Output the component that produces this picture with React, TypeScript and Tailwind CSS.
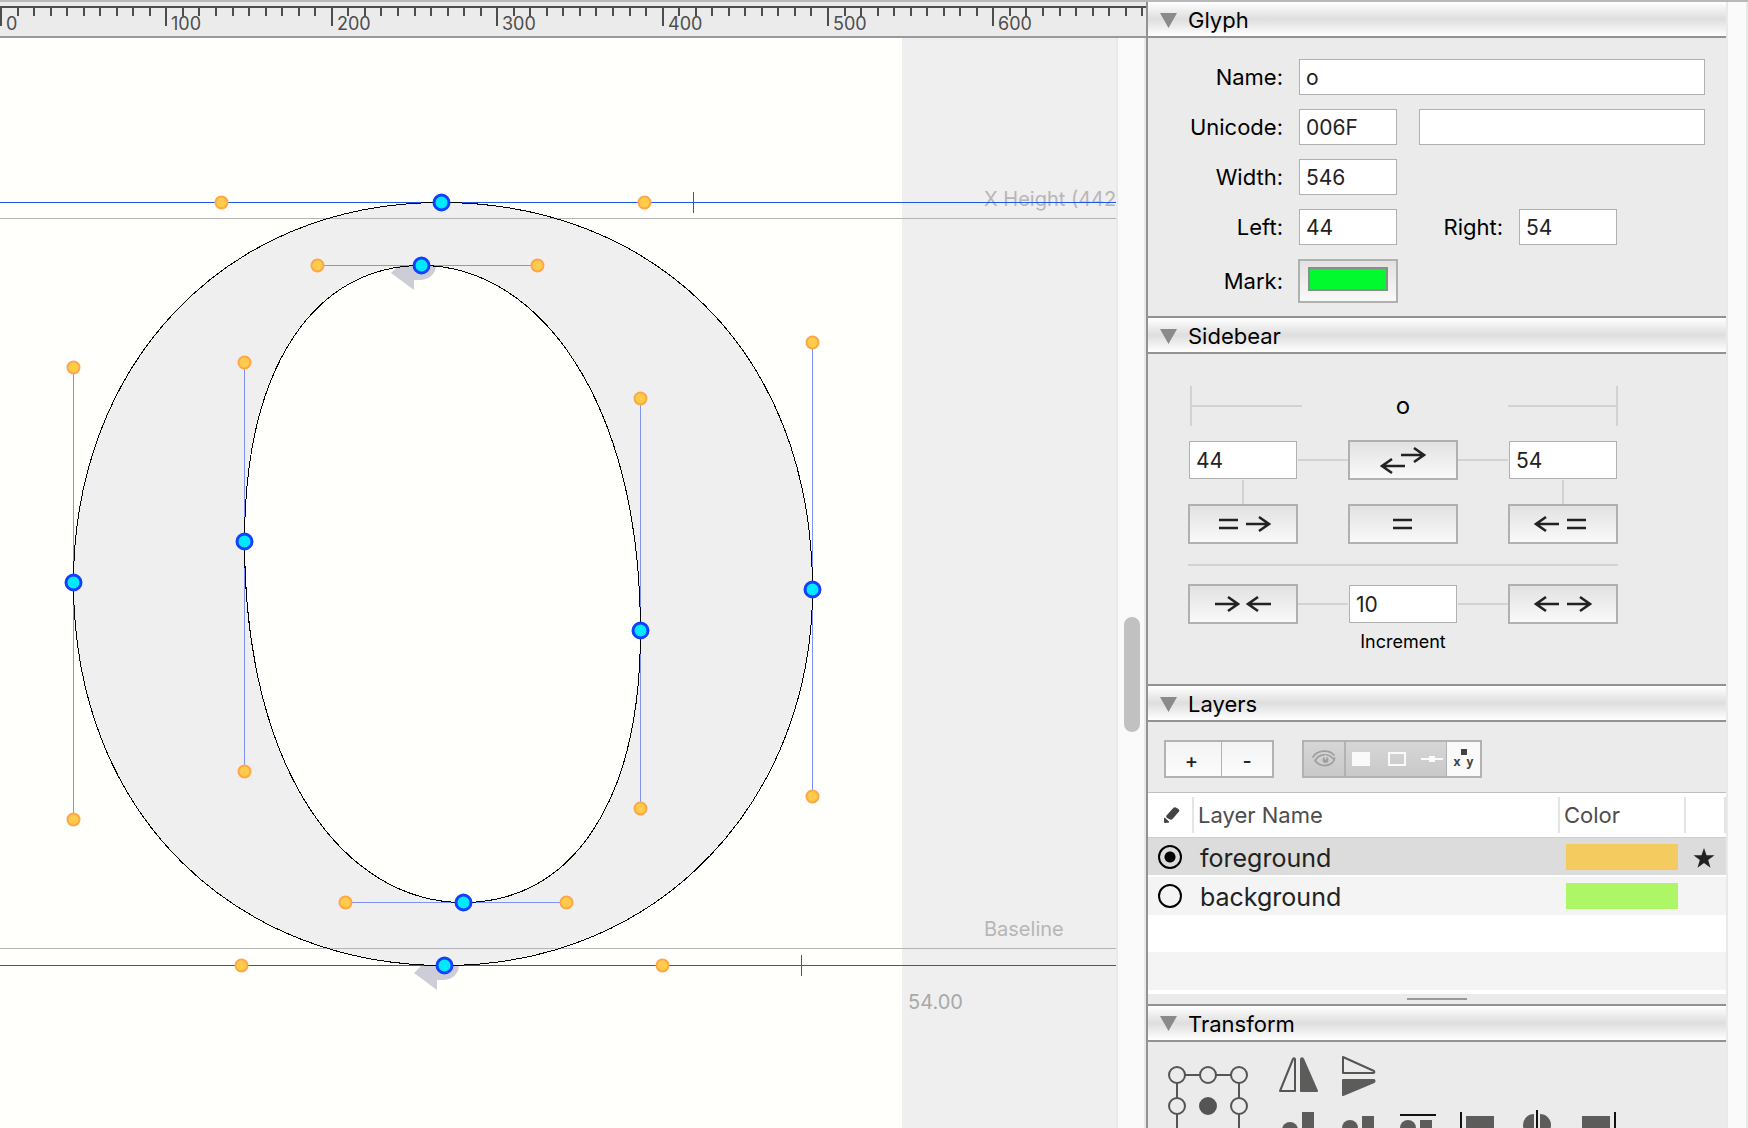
import React, { useEffect, useId, useRef, useState } from "react";

const UNIT = 1.654;

type Pt = [number, number];

const curvePoints: Pt[] = [
  [441, 202], [421, 265], [73, 582], [244, 541],
  [640, 630], [812, 589], [463, 902], [444, 965],
];

const handlePoints: Pt[] = [
  [221, 202], [644, 202], [317, 265], [537, 265],
  [73, 367], [73, 819], [244, 362], [244, 771],
  [640, 398], [640, 808], [812, 342], [812, 796],
  [345, 902], [566, 902], [241, 965], [662, 965],
];

const handleLines: [number, number, number, number][] = [
  [73, 367, 73, 820], [244, 362, 244, 772], [640, 399, 640, 808],
  [812, 343, 812, 797], [317, 265, 537, 265], [345, 902, 567, 902],
];

const outer =
  "M441,202 C644,202 812,343 812,589 C812,797 662,965 444,965 C241,965 73,820 73,582 C73,367 221,202 441,202 Z";
const inner =
  "M421,265 C537,265 640,399 640,630 C640,808 567,902 463,902 C345,902 244,772 244,541 C244,362 317,265 421,265 Z";

function Ruler() {
  const box = useRef<HTMLDivElement>(null);
  const [width, setWidth] = useState(0);
  useEffect(() => {
    const el = box.current;
    if (!el) return;
    const measure = () => setWidth(el.clientWidth);
    measure();
    const observer = new ResizeObserver(measure);
    observer.observe(el);
    return () => observer.disconnect();
  }, []);
  const ticks = Array.from({ length: Math.ceil(width / (10 * UNIT)) }, (_, i) => i);
  return (
    <div ref={box} className="h-9 shrink-0 overflow-hidden border-b-2 border-[#999999] bg-[#ebebeb]">
      <svg className="block h-full w-full" aria-label="Horizontal ruler">
        <rect x="0" y="4" width="100%" height="2" fill="#4d4d4d" />
        {ticks.map((i) => (
          <rect
            key={i}
            x={Math.round(i * 10 * UNIT)}
            y="6"
            width="2"
            height={i % 10 === 0 ? 18 : 8}
            fill="#4d4d4d"
          />
        ))}
        {ticks
          .filter((i) => i % 10 === 0 && i * 10 * UNIT + 40 < width)
          .map((i) => (
            <text key={i} x={Math.round(i * 10 * UNIT) + 6} y="28" fontSize="18" fill="#4d4d4d">
              {i * 10}
            </text>
          ))}
      </svg>
    </div>
  );
}

function GlyphCanvas() {
  return (
    <svg className="block h-full w-full" role="img" aria-label="Outline of the glyph o">
      <g transform="translate(0,-38)">
        <rect x="0" y="38" width="902" height="2000" fill="#fffffb" />
        <path d={outer + " " + inner} fill="#efefef" fillRule="evenodd" />
        <g fill="#cdcdd8">
          <path d="M391,273 L399,265 H436 A15,15 0 0 1 421,280 H414 V290 Z" />
          <path d="M414,973 L422,965 H459 A15,15 0 0 1 444,980 H437 V990 Z" />
        </g>
        <g fill="#b6b6b6" fontSize="20">
          <text x="984" y="206">X Height (442)</text>
          <text x="984" y="936">Baseline</text>
          <text x="908" y="1009" fill="#a8a8a8">54.00</text>
        </g>
        <g shapeRendering="crispEdges">
          <rect x="0" y="218" width="100%" height="1" fill="#b4b4b4" />
          <rect x="0" y="948" width="100%" height="1" fill="#b4b4b4" />
          <g fill="#1f56ee">
            <rect x="0" y="202" width="100%" height="1" />
            <rect x="0" y="965" width="100%" height="1" />
            <rect x="693" y="192" width="1" height="21" />
            <rect x="801" y="955" width="1" height="21" />
          </g>
        </g>
        <g transform="translate(0.5,0.5)">
          <g shapeRendering="crispEdges" fill="none" strokeWidth="1">
            <g stroke="#7f93f5">
              {handleLines.map(([x1, y1, x2, y2], i) => (
                <line key={i} x1={x1} y1={y1} x2={x2} y2={y2} />
              ))}
            </g>
            <path d={outer} stroke="#000" />
            <path d={inner} stroke="#000" />
          </g>
          <g fill="#ffcb4a" stroke="#ffa647" strokeWidth="2">
            {handlePoints.map(([x, y], i) => (
              <circle key={i} cx={x} cy={y} r="6" />
            ))}
          </g>
          <g fill="#00eaff" stroke="#1240ff" strokeWidth="3">
            {curvePoints.map(([x, y], i) => (
              <circle key={i} cx={x} cy={y} r="7.5" />
            ))}
          </g>
        </g>
      </g>
    </svg>
  );
}

function Section({ title, first, children }: { title: string; first?: boolean; children: React.ReactNode }) {
  return (
    <section className="shrink-0">
      <h2 className={first ? "" : "border-t-2 border-[#929292]"}>
        <button
          type="button"
          aria-expanded="true"
          className="flex h-9 w-full items-center gap-[11px] border-b-2 border-[#929292] bg-linear-to-b from-white via-[#dedede] to-white pt-0.5 pl-3 text-[22px] leading-none text-black"
        >
          <svg width="17" height="15" className="block" aria-hidden="true">
            <path d="M0,0 H17 L8.5,15 Z" fill="#8a8a8a" />
          </svg>
          {title}
        </button>
      </h2>
      {children}
    </section>
  );
}

function TextField({ label, value, className, id }: { label?: string; value: string; className: string; id?: string }) {
  return (
    <input
      id={id}
      aria-label={label}
      defaultValue={value}
      type="text"
      className={
        "block min-w-0 rounded-none border border-[#b0b0b0] bg-white pt-px pl-1.5 text-[21px] text-[#222222] outline-none " + className
      }
    />
  );
}

function FormLabel({ htmlFor, children, className }: { htmlFor: string; children: React.ReactNode; className: string }) {
  return (
    <label htmlFor={htmlFor} className={"shrink-0 text-right text-[22px] leading-7 text-black " + className}>
      {children}
    </label>
  );
}

function GlyphSection() {
  const id = useId();
  return (
    <Section title="Glyph" first>
      <div className="flex flex-col gap-3.5 pt-[21px] pr-[21px] pb-[13px]">
        <div className="flex items-center gap-4">
          <FormLabel htmlFor={id + "n"} className="w-[135px]">Name:</FormLabel>
          <TextField id={id + "n"} value="o" className="h-9 flex-1" />
        </div>
        <div className="flex items-center gap-4">
          <FormLabel htmlFor={id + "u"} className="w-[135px]">Unicode:</FormLabel>
          <div className="flex min-w-0 flex-1 gap-[22px]">
            <TextField id={id + "u"} value="006F" className="h-9 w-[98px] shrink-0" />
            <TextField label="Unicode character" value="" className="h-9 flex-1" />
          </div>
        </div>
        <div className="flex items-center gap-4">
          <FormLabel htmlFor={id + "w"} className="w-[135px]">Width:</FormLabel>
          <TextField id={id + "w"} value="546" className="h-9 w-[98px]" />
        </div>
        <div className="flex items-center gap-4">
          <FormLabel htmlFor={id + "l"} className="w-[135px]">Left:</FormLabel>
          <TextField id={id + "l"} value="44" className="h-9 w-[98px]" />
          <FormLabel htmlFor={id + "r"} className="w-[90px]">Right:</FormLabel>
          <TextField id={id + "r"} value="54" className="h-9 w-[98px]" />
        </div>
        <div className="flex items-center gap-[15px]">
          <FormLabel htmlFor={id + "m"} className="w-[135px]">Mark:</FormLabel>
          <button
            id={id + "m"}
            type="button"
            className="flex h-11 w-[100px] items-center justify-center border-2 border-[#b0b0b0] bg-linear-to-b from-[#e2e2e2] to-[#f9f9f9] pb-1"
          >
            <span className="block h-6 w-20 border-2 border-[#8c8c8c] bg-[#00fa2e]" />
          </button>
        </div>
      </div>
    </Section>
  );
}

const rightArrow = (x: number, y: number) => `M${x},${y} h23 M${x + 13},${y - 7} l10,7 l-10,7`;
const leftArrow = (x: number, y: number) => `M${x + 24},${y} h-23 M${x + 11},${y - 7} l-10,7 l10,7`;
const equals = (x: number) => `M${x},16 h19 M${x},24 h19`;

function ArrowButton({ label, d }: { label: string; d: string }) {
  return (
    <button
      type="button"
      aria-label={label}
      className="h-10 w-[110px] shrink-0 border-2 border-[#b0b0b0] bg-linear-to-b from-[#e2e2e2] to-[#f9f9f9]"
    >
      <svg viewBox="2 2 106 36" width="106" height="36" className="block" aria-hidden="true">
        <path d={d} fill="none" stroke="#222" strokeWidth="2.6" />
      </svg>
    </button>
  );
}

const Link = () => <span className="h-0.5 w-[50px] bg-[#d2d2d2]" />;

function SidebearSection() {
  const id = useId();
  return (
    <Section title="Sidebear">
      <div className="flex flex-col pt-8 pb-6 pl-10">
        <div className="flex h-10 w-[430px] items-center justify-between">
          <span className="w-[114px] pl-0.5">
            <span className="flex h-10 items-center border-l-2 border-[#d2d2d2]">
              <span className="h-0.5 w-full bg-[#d2d2d2]" />
            </span>
          </span>
          <span className="text-[24px] leading-none text-black">o</span>
          <span className="w-[114px] pl-1">
            <span className="flex h-10 items-center border-r-2 border-[#d2d2d2]">
              <span className="h-0.5 w-full bg-[#d2d2d2]" />
            </span>
          </span>
        </div>
        <div className="mt-3.5 flex items-center">
          <TextField label="Left sidebearing" value="44" className="mx-px h-[38px] w-[108px]" />
          <Link />
          <ArrowButton label="Swap sidebearings" d={rightArrow(53, 15) + leftArrow(33, 26)} />
          <Link />
          <TextField label="Right sidebearing" value="54" className="mx-px h-[38px] w-[108px]" />
        </div>
        <div className="flex h-6 w-[430px] justify-between">
          <span className="flex w-[110px] justify-center"><span className="h-6 w-0.5 bg-[#d2d2d2]" /></span>
          <span className="flex w-[110px] justify-center"><span className="h-6 w-0.5 bg-[#d2d2d2]" /></span>
        </div>
        <div className="flex w-[430px] justify-between">
          <ArrowButton label="Copy left to right" d={equals(31) + rightArrow(58, 20)} />
          <ArrowButton label="Center glyph" d={equals(45)} />
          <ArrowButton label="Copy right to left" d={leftArrow(27, 20) + equals(59)} />
        </div>
        <hr className="mt-5 h-0.5 w-[430px] border-0 bg-[#d2d2d2]" />
        <div className="mt-[18px] flex items-center">
          <ArrowButton label="Decrease both" d={rightArrow(27, 20) + leftArrow(59, 20)} />
          <Link />
          <TextField id={id} value="10" className="mx-px h-[38px] w-[108px]" />
          <Link />
          <ArrowButton label="Increase both" d={leftArrow(27, 20) + rightArrow(59, 20)} />
        </div>
        <label htmlFor={id} className="w-[430px] text-center text-[18px] leading-9 text-black">
          Increment
        </label>
      </div>
    </Section>
  );
}

function LayersToolbar() {
  return (
    <div className="flex gap-7 pt-[18px] pb-3.5 pl-4">
      <div className="flex h-[38px] w-[110px] border-2 border-[#b2b2b2] bg-linear-to-b from-[#f4f4f4] to-[#fcfcfc] text-[20px] font-medium leading-none text-[#222222]">
        <button type="button" aria-label="Add layer" className="w-14 shrink-0 border-r border-[#b2b2b2] pt-1 pr-1">+</button>
        <button type="button" aria-label="Remove layer" className="flex-1 pt-1">-</button>
      </div>
      <div className="flex h-[38px] w-[180px] border-2 border-[#b2b2b2] bg-linear-to-b from-[#d6d6d6] to-[#c9c9c9]">
        <button type="button" aria-label="Toggle visibility" className="flex w-[42px] items-center justify-center border-r-2 border-[#b2b2b2]">
          <svg width="24" height="18" viewBox="0 0 24 18" fill="none" stroke="#9f9f9f" strokeWidth="1.7" strokeLinecap="round" aria-hidden="true">
            <path d="M1,7 C5,0 17,-1 22,5" />
            <path d="M3,10.5 C7,3.5 16,3 21,8.5 M3,10.5 C7,16.500 15,17 20,13 C22,11 23,10 22.500,8" />
            <circle cx="13.500" cy="10" r="3" fill="#9f9f9f" stroke="none" />
            <path d="M13.500,5.500 L13.500,9" stroke="#cfcfcf" strokeWidth="1.500" />
          </svg>
        </button>
        <button type="button" aria-label="Toggle fill" className="flex w-[30px] items-center justify-center">
          <span className="h-3.5 w-[18px] bg-[#fafafa]" />
        </button>
        <button type="button" aria-label="Toggle stroke" className="flex w-[42px] items-center justify-center">
          <span className="h-3.5 w-[18px] border-2 border-[#fafafa]" />
        </button>
        <button type="button" aria-label="Toggle points" className="flex w-7 items-center justify-center">
          <svg width="22" height="6" className="block" aria-hidden="true">
            <rect y="2" width="22" height="2" fill="#fafafa" />
            <rect x="8" width="6" height="6" fill="#fafafa" />
          </svg>
        </button>
        <button type="button" aria-label="Toggle coordinates" className="flex flex-1 flex-col items-center justify-center border-l border-[#b2b2b2] bg-[#fafafa] font-['Open_Sans',sans-serif] text-[12px] font-bold leading-3.5 text-[#444444]">
          <span className="h-1.5 w-1.5 bg-[#444444]" />
          <span className="flex gap-1.5"><span>x</span><span>y</span></span>
        </button>
      </div>
    </div>
  );
}

const layers = [
  { name: "foreground", swatch: "bg-[#f3cb5f]", row: "bg-[#dcdcdc]", star: true },
  { name: "background", swatch: "bg-[#adf767]", row: "bg-[#f4f4f4]", star: false },
];

function LayersSection() {
  const [active, setActive] = useState("foreground");
  const sep = "flex h-9 items-center border-r-2 border-[#e4e4e4]";
  return (
    <Section title="Layers">
      <LayersToolbar />
      <table className="w-full table-fixed border-collapse border-t border-[#c0c0c0] bg-white">
        <colgroup>
          <col className="w-[46px]" />
          <col />
          <col className="w-[126px]" />
          <col className="w-10" />
        </colgroup>
        <thead>
          <tr className="h-[45px] border-b border-[#d0d0d0] text-left text-[22px] leading-none text-[#4d4d4d]">
            <th className="p-0" aria-label="Active">
              <div className={sep + " pl-4"}>
                <svg width="16" height="16" viewBox="0 0 16 16" fill="#444" aria-hidden="true">
                  <path d="M2.500,8.500 L9.500,0.800 Q10.500,0 11.800,0.500 L14.500,2 Q16,3 15,4.500 L8.500,12 Q7.500,13 6,12.500 L3,11 Q1.500,10 2.500,8.500 Z" />
                  <path d="M0.500,11 L5,15 L0.500,15.500 Z" stroke="#444" />
                </svg>
              </div>
            </th>
            <th className="p-0 font-normal"><div className={sep + " pl-1"}>Layer Name</div></th>
            <th className="p-0 font-normal"><div className={sep + " pl-1"}>Color</div></th>
            <th className="p-0" aria-label="Default"><div className={sep} /></th>
          </tr>
        </thead>
        <tbody>
          {layers.map((l) => (
            <tr key={l.name} className={"h-[38px] border-b-2 " + l.row + (l.star ? " border-white" : " border-[#f4f4f4]")}>
              <td className="p-0 pt-0.5 pl-2.5">
                <input
                  type="radio"
                  name="layer"
                  aria-label={l.name}
                  checked={active === l.name}
                  onChange={() => setActive(l.name)}
                  className="block h-6 w-6 appearance-none rounded-full border-2 border-black bg-transparent checked:bg-[radial-gradient(circle,#000_5px,transparent_6px)]"
                />
              </td>
              <td className="p-0 pt-1 pl-1.5 text-[25px] leading-8 text-[#222222]">{l.name}</td>
              <td className="p-0 pt-0.5 pl-1.5"><span className={"block h-[26px] w-28 " + l.swatch} /></td>
              <td className="p-0 pt-1 pl-1.5">
                {l.star && (
                  <svg width="24" height="24" viewBox="0 0 24 24" fill="#222" role="img" aria-label="Default layer">
                    <path d="M12,2 L14.500,9.300 H22.500 L16.200,14 L18.500,21.700 L12,17 L5.500,21.700 L7.800,14 L1.500,9.300 H9.500 Z" />
                  </svg>
                )}
              </td>
            </tr>
          ))}
          <tr className="h-[38px] bg-white"><td colSpan={4} /></tr>
          <tr className="h-[38px] bg-[#f4f4f4]"><td colSpan={4} /></tr>
          <tr className="h-1 bg-white"><td colSpan={4} className="p-0" /></tr>
        </tbody>
      </table>
      <div className="flex h-2.5 items-center justify-center">
        <span className="h-0.5 w-[60px] bg-[#999999]" />
      </div>
    </Section>
  );
}

const alignIcons = [
  { label: "Align bottom", body: <><circle cx="16" cy="20" r="8" fill="#5c5c5a" /><rect x="28" y="2" width="12" height="30" fill="#5c5c5a" /></> },
  { label: "Align middle", body: <><circle cx="16" cy="18" r="8" fill="#5c5c5a" /><rect x="28" y="6" width="12" height="24" fill="#5c5c5a" /></> },
  { label: "Align top", body: <><rect x="6" y="4" width="36" height="2" fill="#111" /><circle cx="14" cy="18" r="8" fill="#5c5c5a" /><rect x="26" y="10" width="12" height="22" fill="#5c5c5a" /></> },
  { label: "Align left", body: <><rect x="6" y="2" width="2" height="32" fill="#111" /><rect x="12" y="6" width="28" height="12" fill="#5c5c5a" /></> },
  { label: "Align center", body: <><path d="M20,4 A11,11 0 0 0 20,26 Z M26,4 A11,11 0 0 1 26,26 Z" fill="#5c5c5a" /><rect x="22" y="0" width="2" height="34" fill="#111" /></> },
  { label: "Align right", body: <><rect x="8" y="6" width="28" height="12" fill="#5c5c5a" /><rect x="40" y="2" width="2" height="32" fill="#111" /></> },
];

function TransformSection() {
  return (
    <Section title="Transform">
      <div className="flex pt-3.5 pl-5">
        <svg width="80" height="100" className="mt-2.5 shrink-0" role="img" aria-label="Transform origin">
          <g fill="none" stroke="#555" strokeWidth="2">
            <rect x="9" y="9" width="62" height="62" />
            <g fill="#ebebeb">
              {[[9, 9], [40, 9], [71, 9], [9, 40], [71, 40], [9, 71], [40, 71], [71, 71]].map(([x, y]) => (
                <circle key={x + "-" + y} cx={x} cy={y} r="8" />
              ))}
            </g>
            <circle cx="40" cy="40" r="8" fill="#555" />
          </g>
        </svg>
        <div className="ml-[26px] flex flex-col">
          <div className="flex gap-[22px]">
            <button type="button" aria-label="Mirror horizontally" className="ml-1">
              <svg width="40" height="40" viewBox="0 0 40 40" aria-hidden="true">
                <path d="M17,3 V35 H2 L15,3 Q16,1.500 17,3 Z" fill="none" stroke="#555" strokeWidth="2" strokeLinejoin="round" />
                <path d="M23,3 Q24,1.500 25,3 L39,35 H23 Z" fill="#5c5c5a" stroke="#5c5c5a" strokeWidth="2" strokeLinejoin="round" />
              </svg>
            </button>
            <button type="button" aria-label="Mirror vertically">
              <svg width="40" height="40" viewBox="0 0 40 40" aria-hidden="true">
                <path d="M3,1 L34,15 Q35,17 33,17 H3 Z" fill="none" stroke="#555" strokeWidth="2" strokeLinejoin="round" />
                <path d="M3,24 H34 Q35,25 34,26 L3,39 Z" fill="#5c5c5a" stroke="#5c5c5a" strokeWidth="2" strokeLinejoin="round" />
              </svg>
            </button>
          </div>
          <div className="mt-3.5 flex gap-3">
            {alignIcons.map((icon) => (
              <button key={icon.label} type="button" aria-label={icon.label}>
                <svg width="48" height="34" className="block" aria-hidden="true">{icon.body}</svg>
              </button>
            ))}
          </div>
        </div>
      </div>
    </Section>
  );
}

export default function App() {
  return (
    <div className="flex h-screen overflow-hidden border-t-2 border-[#b8b8b8] bg-[#ebebeb] font-['Inter',sans-serif]">
      <main className="flex min-w-0 flex-1 flex-col">
        <Ruler />
        <div className="flex min-h-0 flex-1">
          <div className="min-w-0 flex-1 bg-[#efefef]">
            <GlyphCanvas />
          </div>
          <div className="w-[30px] shrink-0 border-x-2 border-[#e9e9e9] bg-[#fafafa] pt-[579px]">
            <div className="ml-1.5 h-[115px] w-4 rounded-full bg-[#c1c1c1]" />
          </div>
        </div>
      </main>
      <aside className="flex w-[602px] shrink-0 border-l-2 border-[#929292]">
        <div className="flex min-w-0 flex-1 flex-col overflow-hidden">
          <GlyphSection />
          <SidebearSection />
          <LayersSection />
          <TransformSection />
        </div>
        <div className="w-[22px] shrink-0 border-x-2 border-[#e9e9e9] bg-[#fafafa]" />
      </aside>
    </div>
  );
}
